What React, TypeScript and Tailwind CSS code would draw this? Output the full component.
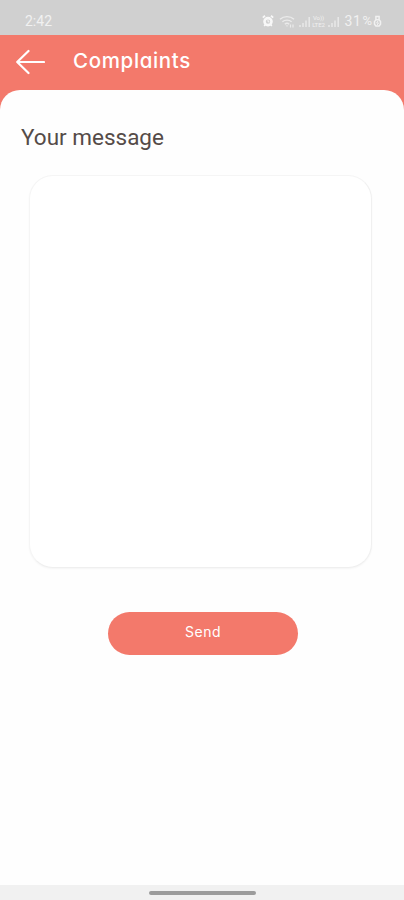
import type { ReactNode } from 'react'

function AlarmIcon() {
  return (
    <svg className="h-[12px] w-[12px]" viewBox="0 0 12 12" fill="none" stroke="currentColor">
      <circle cx="6" cy="6.6" r="3.5" strokeWidth="2.6" />
      <path d="M6 4.8v2h1.4" strokeWidth="1" />
      <path d="M0.8 2.6L3 0.8M11.2 2.6L9 0.8" strokeWidth="1.8" />
      <path d="M2.2 11l1.2-1.6M9.8 11L8.6 9.4" strokeWidth="1.6" />
    </svg>
  )
}

function WifiIcon() {
  return (
    <svg className="h-[13px] w-[16px]" viewBox="0 0 16 13" fill="none" stroke="currentColor" strokeWidth="1.4">
      <path d="M1 4.2C5 0.8 11 0.8 15 4.2" />
      <path d="M3.4 6.8C6 4.6 10 4.6 12.6 6.8" />
      <path d="M5.8 9.2C7 8.2 9 8.2 10.2 9.2" />
      <path d="M8 11.8l-1.3-1.3h2.6z" fill="currentColor" stroke="none" />
      <path d="M11.5 9.5v3M14 12.5v-3" strokeWidth="1.2" />
    </svg>
  )
}

function SignalIcon() {
  return (
    <svg className="h-[11px] w-[12px]" viewBox="0 0 12 11" fill="none" stroke="currentColor" strokeWidth="1.5">
      <path d="M1 11V9M4 11V7M7 11V4.5M10.2 11V1" />
    </svg>
  )
}

function BatteryIcon() {
  return (
    <svg className="h-[12px] w-[9px]" viewBox="0 0 8 12" fill="none" stroke="currentColor" strokeWidth="1.5">
      <path d="M2.4 4.8V1.6h3.2v3.2M1 6.6L2.4 4.8h3.2L7 6.6v2.6L5.6 11H2.4L1 9.2z" />
      <path d="M4.6 5.8L3.2 8h1.8L3.6 10" strokeWidth="1" />
    </svg>
  )
}

function StatusBar() {
  return (
    <div className="flex h-[35px] items-end justify-between bg-[#d0d0d0] pr-[22px] pb-[6px] pl-[25px] font-['Roboto',sans-serif] text-[14px] leading-4 text-[#f1f1f1]">
      <span>2:42</span>
      <div className="flex h-4 items-center">
        <span className="flex text-[#f8f8f8]"><AlarmIcon /></span>
        <span className="ml-[5px] flex text-[#ebebeb]"><WifiIcon /></span>
        <span className="ml-[4px] flex text-[#e8e8e8]"><SignalIcon /></span>
        {/* VoLTE badge */}
        <span className="flex w-[16px] flex-col items-center text-[6px] leading-[7px] text-[#f1f1f1]">
          <span>Vo))</span>
          <span>LTE2</span>
        </span>
        <span className="ml-[1px] flex text-[#e8e8e8]"><SignalIcon /></span>
        <span className="ml-[5px] tracking-[0.6px]">31</span>
        <span className="mr-px ml-px text-[13px]">%</span>
        <BatteryIcon />
      </div>
    </div>
  )
}

function Header({ children }: { children: ReactNode }) {
  return (
    <header className="flex h-[55px] items-start pl-[16px]">
      <button type="button" aria-label="Back" className="mt-[14px] text-white">
        <svg className="h-[26px] w-[29px]" viewBox="0 0 29 26" fill="none" stroke="currentColor" strokeWidth="2.2" strokeLinecap="round" strokeLinejoin="round">
          <path d="M28 13H1.2M12.5 2L1.2 13l11.3 11" />
        </svg>
      </button>
      <h1 className="mt-[11px] ml-[28px] text-[20.5px] leading-[30px] font-medium tracking-[0.65px] text-white">
        {children}
      </h1>
    </header>
  )
}

export default function App() {
  return (
    <div className="flex h-[900px] w-[404px] flex-col bg-[#f3796b] font-['Inter',sans-serif] [font-feature-settings:'cv11']">
      <StatusBar />
      <Header>Complaints</Header>

      <main className="flex flex-1 flex-col rounded-t-[20px] bg-[#fefefe]">
        <label htmlFor="message" className="mt-[33px] ml-[21px] font-['Roboto',sans-serif] text-[22.5px] leading-[28px] text-[#554b48]">
          Your message
        </label>
        <textarea
          id="message"
          className="mt-[24px] ml-[29px] h-[393px] w-[343px] resize-none rounded-[24px] border border-[#f5f5f5] border-r-[#f0f0f0] border-b-[#efefef] bg-white p-4 shadow-[0_1px_2px_rgba(0,0,0,0.04)] outline-none"
        />
        <button
          type="button"
          className="mt-[44px] ml-[108px] h-[43px] w-[190px] rounded-full bg-[#f3796b] pb-[4px] text-[14px] tracking-[0.5px] text-white"
        >
          Send
        </button>
      </main>

      {/* gesture bar */}
      <footer className="flex h-[15px] justify-center bg-[#f1f1f1] pt-[6px]">
        <div className="h-[4px] w-[107px] rounded-full bg-[#9c9c9c]" />
      </footer>
    </div>
  )
}
